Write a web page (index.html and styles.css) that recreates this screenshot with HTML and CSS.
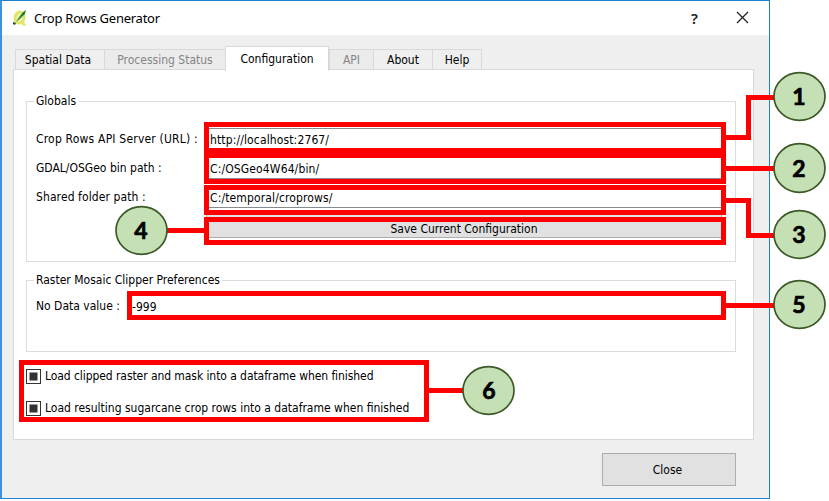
FILE: index.html
```html
<!DOCTYPE html>
<html lang="en">
<head>
<meta charset="utf-8">
<title>Crop Rows Generator</title>
<link rel="stylesheet" href="styles.css">
</head>
<body>
<main class="window">
  <header class="titlebar">
    <svg class="logo" width="16" height="18" viewBox="0 0 16 18">
      <path d="M6 2C2 3 1 8 2 12c1 3 4 4 7 3l3 2 2-1-2-3c2-3 2-7 0-9-2-2-4-3-6-2z" fill="#dfe66a"/>
      <path d="M7 5c-2 1-3 4-2 6 1 2 3 2 5 0 1-2 1-5 0-6-1-1-2-1-3 0z" fill="#f3f5c0"/>
      <path d="M4 13L7 8l4-5 3-2-1 4-5 5z" fill="#3f8f36"/>
      <path d="M8 8l4-5 1-1-1 3z" fill="#176b2c"/>
      <path d="M1 13l3 1-1 2-2-1z" fill="#234a2a"/>
    </svg>
    <h1 class="title">Crop Rows Generator</h1>
    <span class="help">?</span>
    <svg class="close-icon" width="13" height="13" viewBox="0 0 13 13"><path d="M1 1l11 11M12 1L1 12" stroke="#222" stroke-width="1.3" fill="none"/></svg>
  </header>
  <nav class="tabs">
    <span class="tab spatial">Spatial Data</span>
    <span class="tab processing off">Processing Status</span>
    <span class="tab configuration active">Configuration</span>
    <span class="tab api off">API</span>
    <span class="tab about">About</span>
    <span class="tab help-tab">Help</span>
  </nav>
  <section class="panel">
    <fieldset class="group globals">
      <legend>Globals</legend>
      <div class="row"><label class="l-server">Crop Rows API Server (URL) :</label><div class="field">http://localhost:2767/</div></div>
      <div class="row"><label>GDAL/OSGeo bin path :</label><div class="field">C:/OSGeo4W64/bin/</div></div>
      <div class="row"><label class="l-shared">Shared folder path :</label><div class="field">C:/temporal/croprows/</div></div>
      <div class="save"><span>Save Current Configuration</span></div>
    </fieldset>
    <fieldset class="group raster">
      <legend>Raster Mosaic Clipper Preferences</legend>
      <div class="row"><label>No Data value :</label><div class="plain">-999</div></div>
    </fieldset>
    <div class="check"><i class="box"></i><span class="c-mask">Load clipped raster and mask into a dataframe when finished</span></div>
    <div class="check"><i class="box"></i><span>Load resulting sugarcane crop rows into a dataframe when finished</span></div>
  </section>
  <footer class="footer"><div class="close">Close</div></footer>
</main>
<svg class="callouts" width="829" height="501" viewBox="0 0 829 501">
  <g class="marks">
    <rect x="206.5" y="124.500" width="517" height="26"/>
    <rect x="206.500" y="155.500" width="517" height="26"/>
    <rect x="206.500" y="187.500" width="517" height="25"/>
    <rect x="206.500" y="219.500" width="517" height="23"/>
    <rect x="129.500" y="293.500" width="594" height="24"/>
    <rect x="21.500" y="362.500" width="405" height="57"/>
    <path d="M725 137.500H748.500V97.500H775M725 168.500H775M725 200.500H748.500V235.500H775M166 230.500H205M725 305.500H775M428 390.500H464"/>
  </g>
  <g class="badges">
    <ellipse cx="799.500" cy="96.500" rx="25.500" ry="23.800"/>
    <ellipse cx="799.500" cy="168" rx="25.500" ry="24.300"/>
    <ellipse cx="799.500" cy="234.500" rx="25.500" ry="23.800"/>
    <ellipse cx="141.500" cy="230.500" rx="25.500" ry="23.800"/>
    <ellipse cx="799.500" cy="304.500" rx="25.500" ry="23.800"/>
    <ellipse cx="488.500" cy="390.500" rx="25.500" ry="23.800"/>
  </g>
  <g class="digits">
    <text x="799" y="105">1</text>
    <text x="799" y="177">2</text>
    <text x="799" y="243">3</text>
    <text x="141" y="239">4</text>
    <text x="799" y="313">5</text>
    <text x="489" y="399">6</text>
  </g>
</svg>
</body>
</html>
```
FILE: styles.css
```css
* { box-sizing: border-box; }
body {
  margin: 0;
  width: 829px;
  height: 501px;
  overflow: hidden;
  position: relative;
  background: #fff;
  color: #000;
  font: 12px/16px "DejaVu Sans Condensed", "DejaVu Sans", sans-serif;
  font-stretch: condensed;
  white-space: nowrap;
}
.window {
  width: 770px;
  height: 499px;
  border: 1px solid #1c80d0;
  border-left: 2px solid #3a93dc;
  background: #efefef;
  display: flex;
  flex-direction: column;
}
.titlebar {
  height: 34px;
  flex: none;
  background: #fff;
  display: flex;
  align-items: center;
  padding: 0 20px 1px 10px;
}
.title {
  margin: 1px 0 0 6px;
  flex: 1;
  font: 13px/20px "Noto Sans", sans-serif;
  letter-spacing: -0.25px;
}
.help { font: 600 15px/20px "Noto Sans", sans-serif; margin-right: 38px; color: #222; }
.tabs {
  height: 35px;
  flex: none;
  padding-left: 13px;
  display: flex;
  align-items: flex-end;
}
.tab {
  height: 21px;
  border: 1px solid #d9d9d9;
  border-right: 0;
  border-bottom: 0;
  line-height: 21px;
  text-align: center;
}
.spatial { width: 89px; padding-right: 4px; }
.processing { width: 121px; }
.configuration { width: 104px; }
.api { width: 44px; }
.about { width: 59px; }
.help-tab { width: 50px; border-right: 1px solid #d9d9d9; }
.off { color: #858585; background: #ebebeb; }
.active { height: 25px; background: #fff; border-right: 1px solid #d9d9d9; margin-bottom: -1px; line-height: 24px; z-index: 1; }
.panel {
  margin-left: 11px;
  width: 741px;
  height: 371px;
  flex: none;
  margin-top: -1px;
  border: 1px solid #d9d9d9;
  background: #fff;
  padding: 23px 16px 0 12px;
}
.group {
  margin: 0;
  min-width: 0;
  width: 710px;
  border: 1px solid #dcdcdc;
  padding: 0 9px;
}
legend { margin-left: -2px; padding: 0 2px; height: 16px; }
.globals { height: 169px; }
.globals .row { display: flex; height: 29px; align-items: center; }
.globals .row:nth-of-type(1) { margin-top: 15px; }
.globals label { width: 172px; }
.globals .l-server { letter-spacing: 0.2px; }
.globals .l-shared { letter-spacing: 0.1px; }
.field { flex: 1; height: 22px; border: 1px solid #858b8f; line-height: 22px; padding-left: 1px; letter-spacing: 0.13px; }
.save { margin: 2px 4px 0 170px; height: 25px; border: 1px solid #adadad; background: #e1e1e1; text-align: center; line-height: 30px; }
.raster { height: 80px; margin-top: 10px; }
.raster .row { display: flex; padding-top: 10px; }
.raster label { width: 96px; }
.plain { padding-top: 1px; }
.check { display: flex; align-items: center; height: 16px; margin-top: 16px; }
.box { width: 15px; height: 15px; border: 1px solid #333; background: #333; box-shadow: inset 0 0 0 2.5px #fff; margin-right: 4px; }
.c-mask { letter-spacing: -0.07px; }
.footer { padding: 13px 0 0 600px; }
.close { width: 134px; height: 33px; border: 1px solid #adadad; background: #e1e1e1; text-align: center; line-height: 33px; padding-right: 3px; }
.callouts { position: absolute; left: 0; top: 0; }
.marks { fill: none; stroke: #f00; stroke-width: 5; }
.badges { fill: #c5e0b4; stroke: #3b5a28; stroke-width: 1.7; }
.digits { font: bold 23px Lato, sans-serif; fill: #000; stroke: #000; stroke-width: 0.7; text-anchor: middle; }
```
